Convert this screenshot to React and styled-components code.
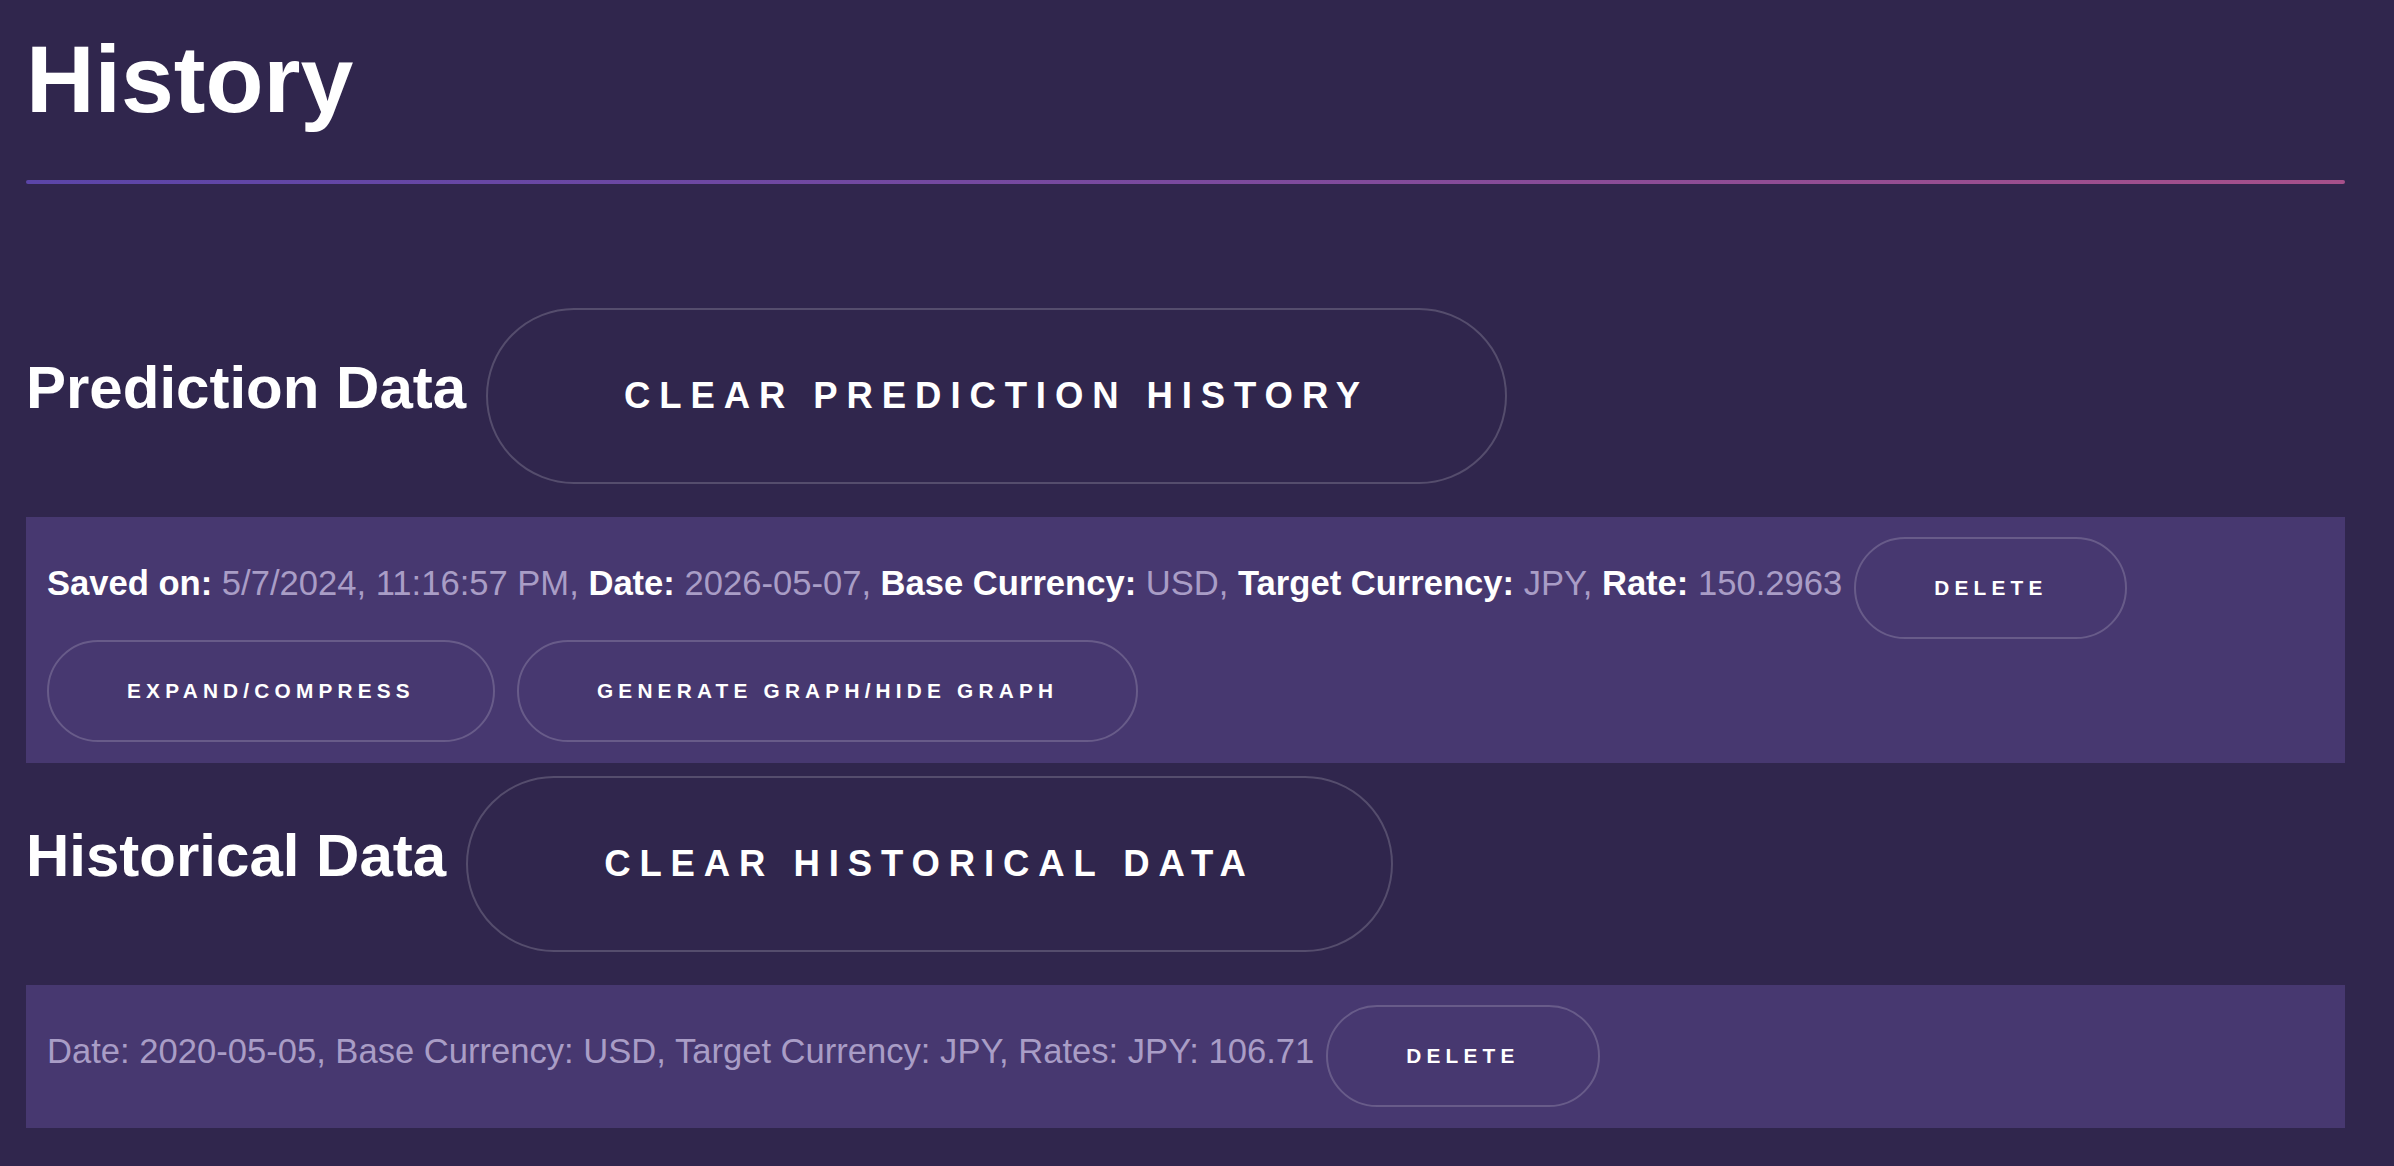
import React from 'react';
import styled, { createGlobalStyle } from 'styled-components';

const GlobalStyle = createGlobalStyle`
  html, body {
    margin: 0;
    padding: 0;
    background: #30264d;
  }
  body {
    font-family: "Liberation Sans", Arial, Helvetica, sans-serif;
    color: #ffffff;
  }
`;

const Page = styled.div`
  min-height: 100vh;
  box-sizing: border-box;
  padding: 24px 49px 40px 26px;
`;

const Title = styled.h1`
  margin: 0;
  font-size: 95px;
  line-height: 110px;
  font-weight: 700;
  color: #ffffff;
`;

const Divider = styled.div`
  margin: 46px 0 124px;
  height: 4px;
  border-radius: 2px;
  background: linear-gradient(90deg, #5b45a8 0%, #7a4a9e 50%, #a6508a 100%);
`;

const SectionRow = styled.div`
  display: flex;
  align-items: baseline;
  gap: 20px;
  margin-bottom: 33px;
`;

const SectionTitle = styled.h2`
  margin: 0;
  font-size: 60px;
  font-weight: 700;
  color: #ffffff;
`;

const PillButton = styled.button`
  box-sizing: border-box;
  height: ${(p) => (p.$big ? '176px' : '102px')};
  padding: ${(p) => (p.$big ? '0 136px' : '0 78px')};
  border: 2px solid rgba(255, 255, 255, 0.18);
  border-radius: 999px;
  background: transparent;
  color: #ffffff;
  font-family: "Liberation Sans", Arial, Helvetica, sans-serif;
  font-weight: 700;
  font-size: ${(p) => (p.$big ? '36.5px' : '20.8px')};
  letter-spacing: ${(p) => (p.$big ? '8.9px' : '5.2px')};
  text-transform: uppercase;
  white-space: nowrap;
  cursor: pointer;
  flex-shrink: 0;
`;

const Card = styled.div`
  background: #473870;
  padding: 20px 21px 21px;
  margin-bottom: 13px;
`;

const CardLine = styled.div`
  display: flex;
  align-items: baseline;
  gap: 12px;
`;

const Info = styled.p`
  margin: 0;
  font-size: 34.6px;
  color: #a99dc6;
  white-space: nowrap;
`;

const Label = styled.strong`
  color: #ffffff;
  font-weight: 700;
`;

const ButtonRow = styled.div`
  display: flex;
  gap: 22px;
  margin-top: 1px;
`;

const predictions = [
  {
    saved: '5/7/2024, 11:16:57 PM',
    date: '2026-05-07',
    base: 'USD',
    target: 'JPY',
    rate: '150.2963',
  },
];

const historical = [
  { date: '2020-05-05', base: 'USD', target: 'JPY', rate: '106.71' },
];

const PredictionCard = ({ item }) => (
  <Card>
    <CardLine>
      <Info>
        <Label>Saved on:</Label> {item.saved}, <Label>Date:</Label> {item.date},{' '}
        <Label>Base Currency:</Label> {item.base}, <Label>Target Currency:</Label>{' '}
        {item.target}, <Label>Rate:</Label> {item.rate}
      </Info>
      <PillButton>Delete</PillButton>
    </CardLine>
    <ButtonRow>
      <PillButton>Expand/Compress</PillButton>
      <PillButton>Generate Graph/Hide Graph</PillButton>
    </ButtonRow>
  </Card>
);

const HistoricalCard = ({ item }) => (
  <Card>
    <CardLine>
      <Info>
        Date: {item.date}, Base Currency: {item.base}, Target Currency: {item.target}, Rates:{' '}
        {item.target}: {item.rate}
      </Info>
      <PillButton>Delete</PillButton>
    </CardLine>
  </Card>
);

const App = () => {
  return (
    <Page>
      <GlobalStyle />
      <Title>History</Title>
      <Divider />

      <SectionRow>
        <SectionTitle>Prediction Data</SectionTitle>
        <PillButton $big>Clear Prediction History</PillButton>
      </SectionRow>
      {predictions.map((item, i) => (
        <PredictionCard key={i} item={item} />
      ))}

      <SectionRow>
        <SectionTitle>Historical Data</SectionTitle>
        <PillButton $big>Clear Historical Data</PillButton>
      </SectionRow>
      {historical.map((item, i) => (
        <HistoricalCard key={i} item={item} />
      ))}
    </Page>
  );
};

export default App;
